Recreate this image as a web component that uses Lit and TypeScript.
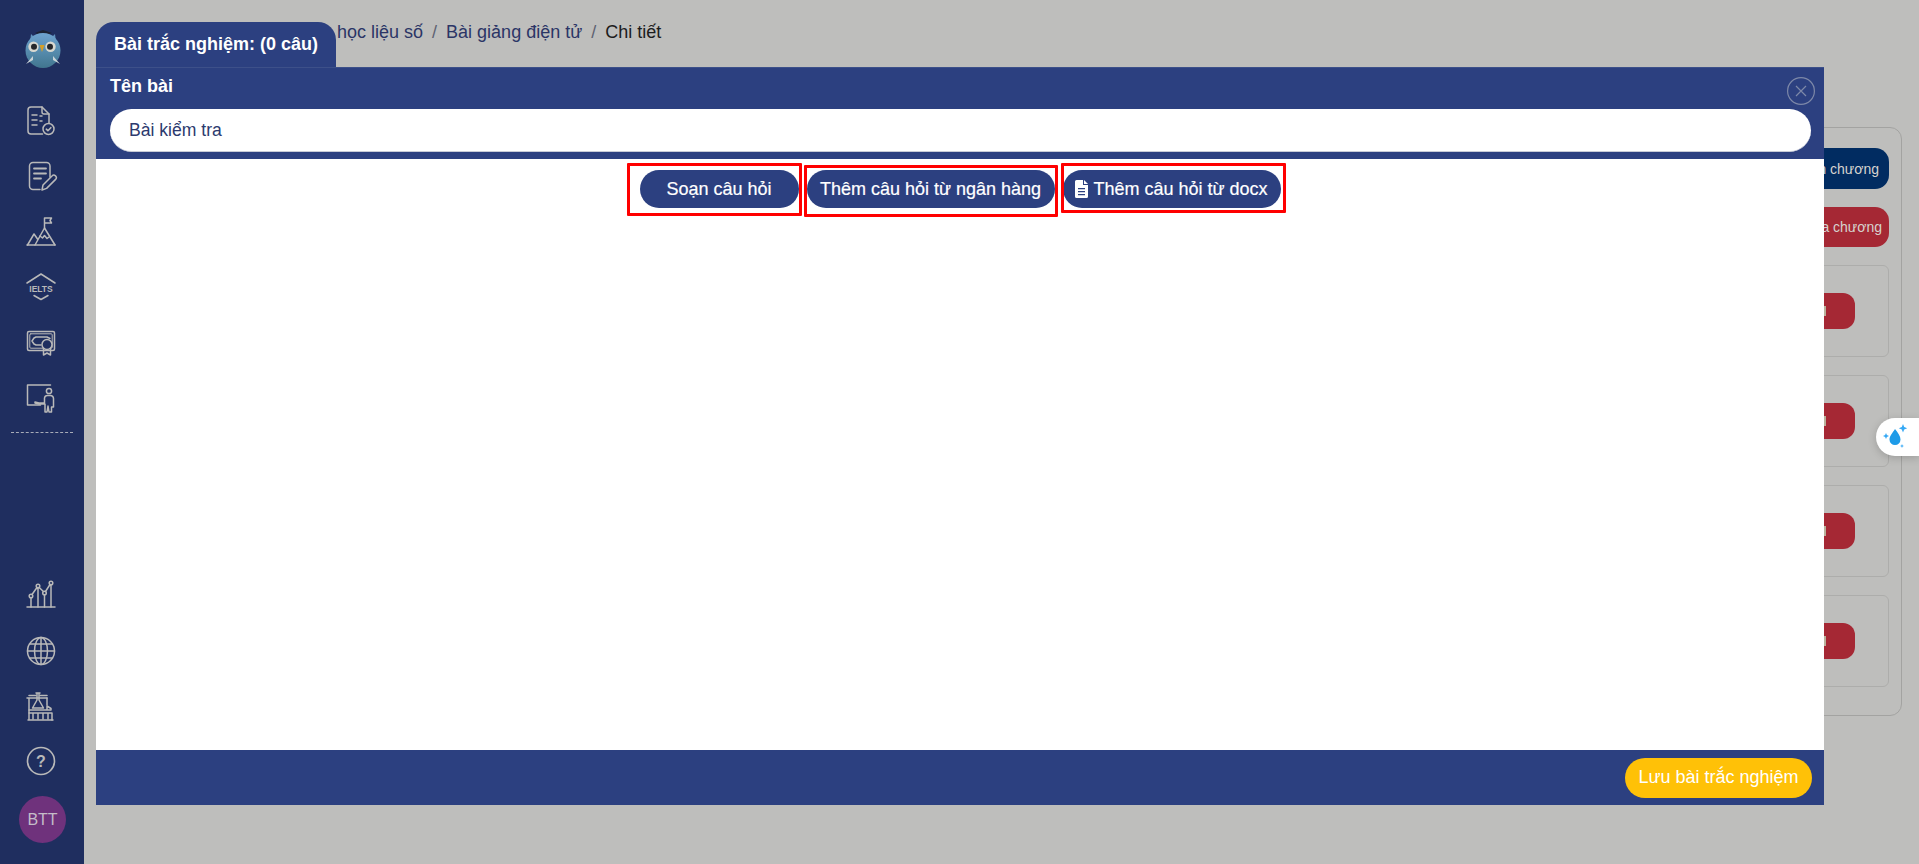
import { LitElement, html, css, svg } from "lit";
import { customElement } from "lit/decorators.js";

const ic = (body: unknown) => html`<svg class="ic" viewBox="0 0 34 34" width="34" height="34" fill="none" stroke="#b9b9b9" stroke-width="1.5" stroke-linecap="round" stroke-linejoin="round">${body}</svg>`;

const topIcons = [
  svg`<path d="M18.5 30H7a3 3 0 0 1-3-3V6a3 3 0 0 1 3-3h11l7 7v9"/><path d="M18 3v5a2 2 0 0 0 2 2h5"/><path d="M8 11h5M8 16h5M8 21h5M16 12h2M16 17h2"/><circle cx="24.5" cy="25" r="5.5"/><path d="M22.3 25.2l1.6 1.5 2.9-3" stroke-width="1.6"/>`,
  svg`<path d="M16 30.5H9a3.5 3.5 0 0 1-3.5-3.5V7A3.5 3.5 0 0 1 9 3.5h13.5A3.5 3.5 0 0 1 26 7v11"/><path d="M10 9.5h12M10 14.5h12M10 19.5h7" stroke-width="1.8"/><path d="M18 31l1-5 9-9a2.4 2.4 0 0 1 3.6 3.4l-9 9z"/>`,
  svg`<path d="M3 30h28"/><path d="M3.5 30L10 19l3.5 5M11 30l9.5-17L31 30"/><path d="M16 21l2.5 2 2-2.5 2.5 3 2-1.500"/><path d="M20.500 13V3h7l-1.500 2.500 1.500 2.500h-7"/>`,
  svg`<path d="M3 13L17 4l14 9"/><path d="M10 25.500l7 4 7-4"/><text x="17" y="22" text-anchor="middle" font-family="Liberation Sans, sans-serif" font-weight="700" font-size="8.500" fill="#b9b9b9" stroke="none">IELTS</text>`,
  svg`<rect x="3.500" y="5.500" width="27" height="19" rx="1.500"/><rect x="5.800" y="7.800" width="22.400" height="14.400" rx="1" stroke-width="1"/><path d="M17 19h-5l-2-1-2-3 2-3 2-1h11l3 1.500"/><circle cx="23" cy="18.500" r="5" fill="#1f2e5f"/><path d="M19.500 22.500V29l3.500-2 3.500 2v-6.500"/>`,
  svg`<path d="M26.500 4H3.500v20h13"/><circle cx="25" cy="10" r="2.600"/><path d="M11 21l4 1h5.500v-5a3 3 0 0 1 3-2.500h3a3 3 0 0 1 3 3V26h-2v5h-2.500l-1-6-1 6H21v-8h-6l-4-1z"/>`,
];
const bottomIcons = [
  svg`<path d="M3 29h28"/><circle cx="7" cy="18" r="1.800"/><circle cx="14" cy="8" r="1.800"/><circle cx="20.500" cy="15" r="1.800"/><circle cx="27" cy="5" r="1.800"/><path d="M8 16.500l5-7M15.200 9.500l4.200 4M21.500 13.500l4.500-7M7 20v9M14 10v19M20.500 17v12M27 7v22"/>`,
  svg`<circle cx="17" cy="17" r="13.500"/><ellipse cx="17" cy="17" rx="6.500" ry="13.500"/><path d="M17 3.500v27M3.500 17h27M5.500 10h23M5.500 24h23"/>`,
  svg`<path d="M4 31h25M5 31V9h18M3 9h17"/><path d="M5 6.500h7M16 6.500h7M23 9v7"/><path d="M12 4h4M13 4v7l-4.500 8h11L15 11V4"/><path d="M5 21h22M5 24h23v7M9 25v5M14 25v5M19 25v5M24 25v5M23 21v-4l4 2.500V21"/>`,
  svg`<circle cx="17" cy="17" r="13.500" stroke-width="1.600"/><text x="17" y="22.500" text-anchor="middle" font-family="Liberation Sans, sans-serif" font-weight="700" font-size="16" fill="#b9b9b9" stroke="none">?</text>`,
];

const BODY_X = 96;
const BODY_Y = 159;
const redBoxes = [
  { x: 627, y: 163, w: 175, h: 53 },
  { x: 804, y: 165, w: 254, h: 52 },
  { x: 1061, y: 163, w: 225, h: 50 },
];

@customElement("app-root")
export class AppRoot extends LitElement {
  static styles = css`
    :host { display: block; width: 1919px; height: 864px; overflow: hidden; position: relative; background: #bebebc; font-family: "Liberation Sans", Arial, sans-serif; font-size: 18px; }
    .page { display: flex; height: 864px; }
    .side { width: 84px; flex: none; background: #1f2e5f; display: flex; flex-direction: column; align-items: stretch; }
    .logo { display: flex; justify-content: center; padding: 30px 0 0 1px; height: 93.300px; box-sizing: border-box; }
    .slot { height: 55.400px; display: flex; align-items: center; justify-content: center; padding-right: 2px; box-sizing: border-box; }
    .rule { margin: 6px 11px 0; border-top: 1px dashed #a8acb8; }
    .spacer { flex: 1; }
    .avatar { width: 47px; height: 47px; margin: 7px 0 21px 19px; border-radius: 50%; background: #6f327c; color: #c4bcc8; display: flex; align-items: center; justify-content: center; font-size: 16px; }
    .main { flex: 1; min-width: 0; padding: 0 17px 0 30px; }
    .crumbs { height: 127px; box-sizing: border-box; padding: 23px 0 0 223px; color: #2b3566; line-height: 18px; white-space: nowrap; }
    .sep { color: #5d6272; margin: 0 9px; }
    .crumbs b { font-weight: 400; color: #1c1c1c; }
    .panel { height: 589px; box-sizing: border-box; border: 1px solid #a3a3a1; border-radius: 12px; padding: 20px 12px 0; display: flex; flex-direction: column; align-items: flex-end; gap: 18px; }
    .pbtn { display: flex; align-items: center; justify-content: flex-end; border-radius: 14px; color: #d6d3cf; font-size: 14px; width: 120px; box-sizing: border-box; white-space: nowrap; }
    .pbtn.blue { background: #012c61; height: 41px; padding-right: 10px; }
    .pbtn.red { background: #a52834; height: 40px; padding-right: 7px; }
    .card { align-self: stretch; height: 92px; box-sizing: border-box; border: 1px solid #adadab; border-radius: 6px; display: flex; align-items: center; justify-content: flex-end; padding-right: 33px; }
    .del { width: 60px; height: 36px; background: #a52834; border-radius: 12px; display: flex; align-items: center; padding-left: 21px; box-sizing: border-box; }
    .del i { width: 10px; height: 10px; background: #b9b29c; display: block; }

    .float { position: absolute; right: 0; top: 418px; width: 43px; height: 38px; background: #fff; border-radius: 19px 0 0 19px; box-shadow: 0 2px 8px rgba(0,0,0,.18); display: flex; align-items: center; padding-left: 4px; box-sizing: border-box; }

    .modal { position: absolute; left: 96px; top: 22px; width: 1728px; height: 783px; display: flex; flex-direction: column; }
    .tab { width: 240px; height: 45px; box-sizing: border-box; background: #2c4080; color: #fff; font-weight: 700; border-radius: 18px 18px 0 0; padding: 13px 0 0 18px; line-height: 18px; white-space: nowrap; }
    .head { height: 92px; box-sizing: border-box; background: #2c4080; border-top: 1px solid #3d5089; padding: 9px 13px 0 14px; position: relative; }
    .label { color: #fff; font-weight: 700; line-height: 18px; margin-bottom: 14px; }
    .input { height: 43px; box-sizing: border-box; background: #fff; border-radius: 22px; border-bottom: 1px solid #c8cbd6; color: #2c3a6e; padding: 0 19px; display: flex; align-items: center; font-size: 17.600px; }
    .close { position: absolute; right: 9px; top: 9px; width: 28px; height: 28px; }
    .body { flex: 1; background: #fff; position: relative; display: flex; align-items: flex-start; justify-content: center; gap: 8px; padding-top: 11px; }
    .btn { height: 38px; box-sizing: border-box; background: #2c4080; color: #fff; border-radius: 19px; display: flex; align-items: center; justify-content: center; gap: 5px; white-space: nowrap; -webkit-text-stroke: .2px #fff; }
    .b1 { width: 159px; }
    .b2 { width: 248px; }
    .b3 { width: 218px; }
    .box { position: absolute; border: 3.500px solid #f00; box-sizing: border-box; border-radius: 1px; pointer-events: none; }
    .foot { height: 55px; background: #2c4080; display: flex; align-items: center; justify-content: flex-end; padding: 0 12px 0 0; }
    .save { height: 40px; width: 187px; border-radius: 20px; background: #ffc107; color: #fff; display: flex; align-items: center; justify-content: center; white-space: nowrap; }
    .ic { display: block; }
  `;

  render() {
    return html`
      <div class="page">
        <aside class="side">
          <div class="logo">
            <svg width="36" height="38" viewBox="0 0 36 38">
              <defs><linearGradient id="ow" x1="0" y1="0" x2="0" y2="1"><stop offset="0" stop-color="#6ea3cf"/><stop offset="1" stop-color="#41768f"/></linearGradient></defs>
              <path d="M6 4l4 4h16l4-4 1 8H5z" fill="#5f92bd"/>
              <path d="M10 3L18 0l9 3-9 3z" fill="#1c2233"/>
              <circle cx="18" cy="20.500" r="17.500" fill="url(#ow)"/>
              <path d="M1 34l7-8 0 4zM35 34l-7-8 0 4z" fill="#c9d3d8"/>
              <circle cx="8.500" cy="16.700" r="5.200" fill="#d8d8d0"/><circle cx="25.500" cy="16.700" r="5.200" fill="#d8d8d0"/>
              <circle cx="9" cy="16.700" r="3" fill="#26272a"/><circle cx="25" cy="16.700" r="3" fill="#26272a"/>
              <path d="M14.500 15h5L17 22z" fill="#d79f26"/>
            </svg>
          </div>
          ${topIcons.map((i) => html`<div class="slot">${ic(i)}</div>`)}
          <div class="rule"></div>
          <div class="spacer"></div>
          ${bottomIcons.map((i) => html`<div class="slot">${ic(i)}</div>`)}
          <div class="avatar">BTT</div>
        </aside>
        <main class="main">
          <div class="crumbs">học liệu số<span class="sep">/</span>Bài giảng điện tử<span class="sep">/</span><b>Chi tiết</b></div>
          <section class="panel">
            <div class="pbtn blue">Thêm chương</div>
            <div class="pbtn red">Xóa chương</div>
            ${[0, 1, 2, 3].map(() => html`<div class="card"><div class="del"><i></i></div></div>`)}
          </section>
        </main>
      </div>

      <div class="float">
        <svg width="30" height="28" viewBox="0 0 30 28">
          <path d="M15 6c3 4 5.500 7 5.500 10.500a5.500 5.500 0 0 1-11 0C9.500 13 12.500 10 15 6z" fill="#1e9be8"/>
          <path d="M23 1l1.200 3 3 1.200-3 1.200-1.200 3-1.200-3-3-1.200 3-1.200zM6 10l.9 2.100 2.100.9-2.100.9-.9 2.100-.9-2.100-2.100-.9 2.100-.9zM22 21l.6 1.400 1.400.6-1.400.6-.6 1.400-.6-1.400-1.400-.6 1.400-.6z" fill="#36a9f5"/>
        </svg>
      </div>

      <div class="modal">
        <div class="tab">Bài trắc nghiệm: (0 câu)</div>
        <div class="head">
          <div class="label">Tên bài</div>
          <div class="input">Bài kiểm tra</div>
          <svg class="close" viewBox="0 0 28 28" fill="none" stroke="#7d88a8" stroke-width="1.200">
            <circle cx="14" cy="14" r="13.400"/><path d="M9 9l10 10M19 9L9 19"/>
          </svg>
        </div>
        <div class="body">
          <div class="btn b1">Soạn câu hỏi</div>
          <div class="btn b2">Thêm câu hỏi từ ngân hàng</div>
          <div class="btn b3">
            <svg width="13" height="18" viewBox="0 0 13 18"><path fill-rule="evenodd" d="M1.500 0H8v5h5v11.500a1.500 1.500 0 0 1-1.500 1.500h-10A1.500 1.500 0 0 1 0 16.500v-15A1.500 1.500 0 0 1 1.500 0zM9 0l4 4H9zM3 8v1.300h7V8zM3 11v1.300h7V11zM3 14v1.300h7V14z" fill="#fff"/></svg>
            <span>Thêm câu hỏi từ docx</span>
          </div>
          ${redBoxes.map((b) => html`<div class="box" style="left:${b.x - BODY_X}px;top:${b.y - BODY_Y}px;width:${b.w}px;height:${b.h}px"></div>`)}
        </div>
        <div class="foot"><div class="save">Lưu bài trắc nghiệm</div></div>
      </div>
    `;
  }
}
